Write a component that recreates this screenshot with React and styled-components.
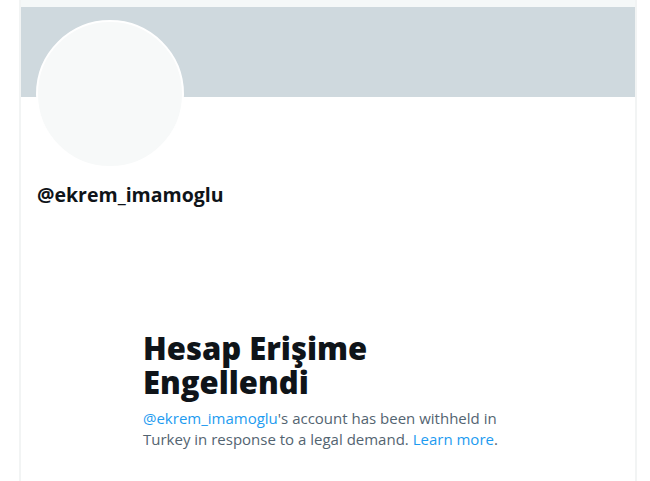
import React from "react";
import styled, { createGlobalStyle } from "styled-components";

const Global = createGlobalStyle`
  html, body { margin: 0; padding: 0; background: #ffffff; }
  body { font-family: "Open Sans", "Liberation Sans", Arial, sans-serif; }
`;

const Page = styled.div`
  width: 650px;
  height: 481px;
  overflow: hidden;
  background: #ffffff;
  padding-left: 19px;
  box-sizing: border-box;
`;

const Card = styled.div`
  width: 618px;
  height: 481px;
  box-sizing: border-box;
  border-left: 2px solid #f2f4f4;
  border-right: 2px solid #f2f4f4;
  background: #ffffff;
  display: flex;
  flex-direction: column;
`;

const TopStrip = styled.div`
  height: 7px;
  background: #f5f8f8;
`;

const Banner = styled.div`
  height: 90px;
  background: #cfd9de;
`;

const ProfileHead = styled.div`
  position: relative;
  height: 80px;
`;

const Avatar = styled.div`
  position: absolute;
  left: 15px;
  top: -77px;
  width: 144px;
  height: 144px;
  border-radius: 50%;
  background: #f7f9f9;
  border: 2px solid #ffffff;
`;

const Handle = styled.div`
  padding: 6px 0 0 16px;
  font-family: "Open Sans", "Liberation Sans", Arial, sans-serif;
  font-weight: 700;
  font-size: 19.5px;
  color: #0f1419;
  line-height: 24px;
`;

const Empty = styled.div`
  width: 370px;
  margin: 124px auto 0;
`;

const Title = styled.h1`
  margin: 0 0 9px;
  font-family: "Open Sans", "Liberation Sans", Arial, sans-serif;
  font-weight: 800;
  font-size: 31px;
  line-height: 34px;
  color: #0f1419;
`;

const Body = styled.p`
  margin: 0;
  font-family: "Open Sans", "Liberation Sans", Arial, sans-serif;
  font-size: 15px;
  line-height: 21px;
  color: #536471;
`;

const Link = styled.span`
  color: #1d9bf0;
`;

export default function App() {
  return (
    <>
      <Global />
      <Page>
        <Card>
          <TopStrip />
          <Banner />
          <ProfileHead>
            <Avatar />
          </ProfileHead>
          <Handle>@ekrem_imamoglu</Handle>
          <Empty>
            <Title>Hesap Erişime Engellendi</Title>
            <Body>
              <Link>@ekrem_imamoglu</Link>'s account has been withheld in Turkey in
              response to a legal demand. <Link>Learn more</Link>.
            </Body>
          </Empty>
        </Card>
      </Page>
    </>
  );
}
